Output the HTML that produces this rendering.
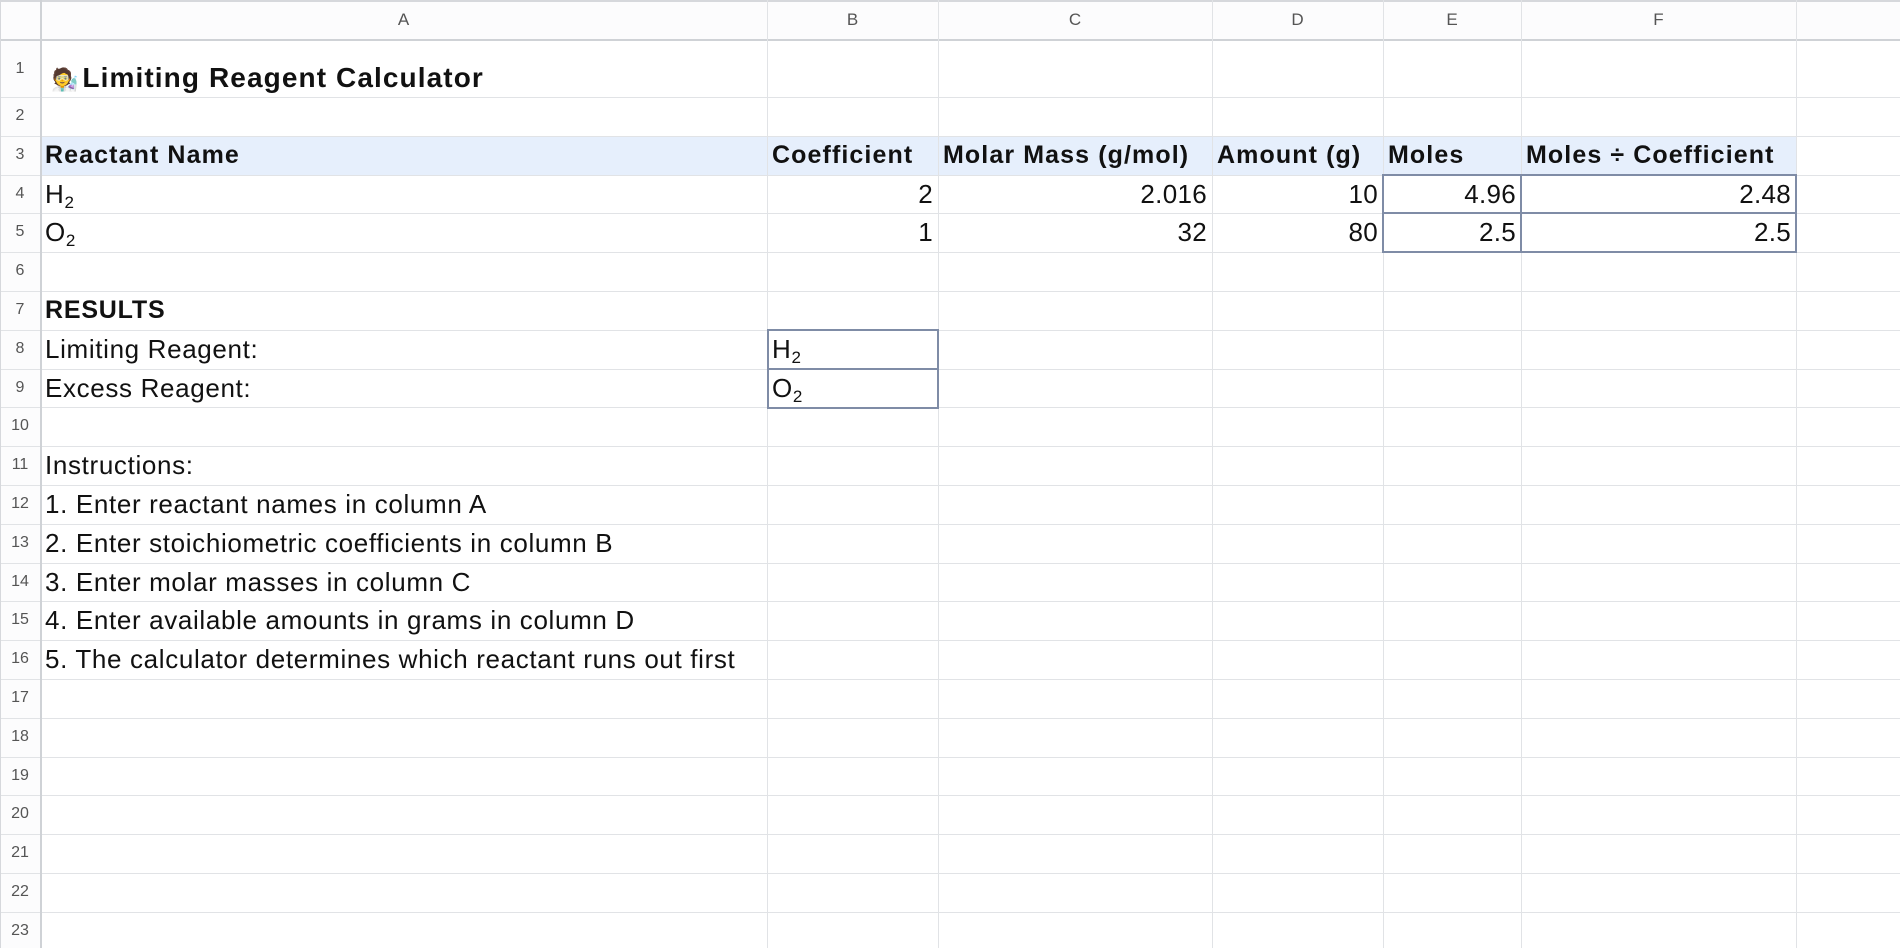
<!DOCTYPE html>
<html><head><meta charset="utf-8"><style>
*{margin:0;padding:0;box-sizing:border-box}
body{width:1900px;height:948px;overflow:hidden;background:#fff;position:relative;font-family:"Liberation Sans",Arial,sans-serif;color:#111}
.h{position:absolute;left:0;width:1900px;height:1px;background:#e1e3e6}
.v{position:absolute;top:0;height:948px;width:1px;background:#e1e3e6}
.c{position:absolute;height:38.8px;line-height:38.8px;font-size:26px;letter-spacing:0.65px;white-space:nowrap;padding:0 5px}
.r{text-align:right;padding-right:5px;letter-spacing:0.3px}
.b{font-weight:bold;font-size:25px;letter-spacing:1.1px}
.col{position:absolute;top:0;height:40px;line-height:40px;text-align:center;font-size:17px;color:#555}
.rn{position:absolute;left:0;width:40px;height:38.8px;line-height:38.8px;text-align:center;font-size:16px;color:#555}
sub{font-size:17px;vertical-align:-5px;line-height:0}
.box{position:absolute;border:2px solid #7f8ca6}
</style></head><body>
<div style="position:absolute;left:40px;top:136px;width:1756px;height:39px;background:#e6effc"></div>
<div style="position:absolute;left:0;top:0;width:40px;height:948px;background:#fcfcfd"></div>
<div style="position:absolute;left:0;top:0;width:1900px;height:40px;background:#fcfcfd"></div>
<div class="h" style="top:0;background:#d6d8dc;height:2px"></div>
<div class="h" style="top:39px;background:#cfd2d6;height:2px"></div>
<div class="h" style="top:97px"></div><div class="h" style="top:136px"></div><div class="h" style="top:174.6px"></div><div class="h" style="top:213.4px"></div><div class="h" style="top:252.2px"></div><div class="h" style="top:291px"></div><div class="h" style="top:329.8px"></div><div class="h" style="top:368.6px"></div><div class="h" style="top:407.4px"></div><div class="h" style="top:446.2px"></div><div class="h" style="top:485px"></div><div class="h" style="top:523.8px"></div><div class="h" style="top:562.6px"></div><div class="h" style="top:601.4px"></div><div class="h" style="top:640.2px"></div><div class="h" style="top:679px"></div><div class="h" style="top:717.8px"></div><div class="h" style="top:756.6px"></div><div class="h" style="top:795.4px"></div><div class="h" style="top:834.2px"></div><div class="h" style="top:873px"></div><div class="h" style="top:911.8px"></div>
<div class="v" style="left:0;background:#d6d8dc"></div>
<div class="v" style="left:40px;background:#cfd2d6;width:2px"></div>
<div class="v" style="left:767px"></div><div class="v" style="left:938px"></div><div class="v" style="left:1212px"></div><div class="v" style="left:1383px"></div><div class="v" style="left:1521px"></div><div class="v" style="left:1796px"></div>
<div class="col" style="left:40px;width:727px">A</div>
<div class="col" style="left:767px;width:171px">B</div>
<div class="col" style="left:938px;width:274px">C</div>
<div class="col" style="left:1212px;width:171px">D</div>
<div class="col" style="left:1383px;width:138px">E</div>
<div class="col" style="left:1521px;width:275px">F</div>
<div class="col" style="left:1796px;width:220px">G</div>
<div class="rn" style="top:40px;height:57px;line-height:57px">1</div>
<div class="rn" style="top:97px">2</div><div class="rn" style="top:136px">3</div><div class="rn" style="top:174.6px">4</div><div class="rn" style="top:213.4px">5</div><div class="rn" style="top:252.2px">6</div><div class="rn" style="top:291px">7</div><div class="rn" style="top:329.8px">8</div><div class="rn" style="top:368.6px">9</div><div class="rn" style="top:407.4px">10</div><div class="rn" style="top:446.2px">11</div><div class="rn" style="top:485px">12</div><div class="rn" style="top:523.8px">13</div><div class="rn" style="top:562.6px">14</div><div class="rn" style="top:601.4px">15</div><div class="rn" style="top:640.2px">16</div><div class="rn" style="top:679px">17</div><div class="rn" style="top:717.8px">18</div><div class="rn" style="top:756.6px">19</div><div class="rn" style="top:795.4px">20</div><div class="rn" style="top:834.2px">21</div><div class="rn" style="top:873px">22</div><div class="rn" style="top:911.8px">23</div>
<div class="c" style="left:46px;top:57px;height:42px;line-height:42px;font-size:28px;font-weight:bold;letter-spacing:1.1px"><span style="font-size:22px;margin-right:4px;letter-spacing:0">🧑‍🔬</span>Limiting Reagent Calculator</div>
<div class="c b" style="left:40px;top:136px">Reactant Name</div>
<div class="c b" style="left:767px;top:136px">Coefficient</div>
<div class="c b" style="left:938px;top:136px">Molar Mass (g/mol)</div>
<div class="c b" style="left:1212px;top:136px">Amount (g)</div>
<div class="c b" style="left:1383px;top:136px">Moles</div>
<div class="c b" style="left:1521px;top:136px">Moles ÷ Coefficient</div>
<div class="c" style="left:40px;top:174.6px">H<sub>2</sub></div>
<div class="c r" style="left:767px;width:171px;top:174.6px">2</div>
<div class="c r" style="left:938px;width:274px;top:174.6px">2.016</div>
<div class="c r" style="left:1212px;width:171px;top:174.6px">10</div>
<div class="c r" style="left:1383px;width:138px;top:174.6px">4.96</div>
<div class="c r" style="left:1521px;width:275px;top:174.6px">2.48</div>
<div class="c" style="left:40px;top:213.4px">O<sub>2</sub></div>
<div class="c r" style="left:767px;width:171px;top:213.4px">1</div>
<div class="c r" style="left:938px;width:274px;top:213.4px">32</div>
<div class="c r" style="left:1212px;width:171px;top:213.4px">80</div>
<div class="c r" style="left:1383px;width:138px;top:213.4px">2.5</div>
<div class="c r" style="left:1521px;width:275px;top:213.4px">2.5</div>
<div class="box" style="left:1382px;top:174px;width:140px;height:40px"></div>
<div class="box" style="left:1520px;top:174px;width:277px;height:40px"></div>
<div class="box" style="left:1382px;top:212px;width:140px;height:41px"></div>
<div class="box" style="left:1520px;top:212px;width:277px;height:41px"></div>
<div class="c b" style="left:40px;top:291px;letter-spacing:0.8px">RESULTS</div>
<div class="c" style="left:40px;top:329.8px">Limiting Reagent:</div>
<div class="c" style="left:40px;top:368.6px">Excess Reagent:</div>
<div class="c" style="left:767px;top:329.8px">H<sub>2</sub></div>
<div class="c" style="left:767px;top:368.6px">O<sub>2</sub></div>
<div class="box" style="left:767px;top:329px;width:172px;height:41px"></div>
<div class="box" style="left:767px;top:368px;width:172px;height:41px"></div>
<div class="c" style="left:40px;top:446.2px">Instructions:</div>
<div class="c" style="left:40px;top:485px">1. Enter reactant names in column A</div>
<div class="c" style="left:40px;top:523.8px">2. Enter stoichiometric coefficients in column B</div>
<div class="c" style="left:40px;top:562.6px">3. Enter molar masses in column C</div>
<div class="c" style="left:40px;top:601.4px">4. Enter available amounts in grams in column D</div>
<div class="c" style="left:40px;top:640.2px">5. The calculator determines which reactant runs out first</div>
</body></html>
